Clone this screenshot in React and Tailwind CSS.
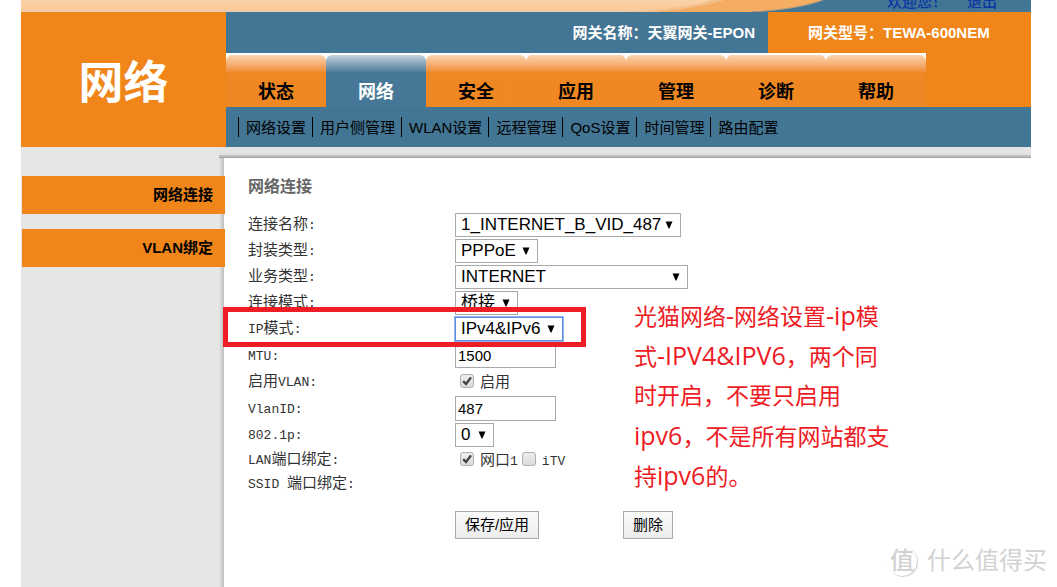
import React, { useState } from 'react';

const tabs = ['状态', '网络', '安全', '应用', '管理', '诊断', '帮助'];

const subMenu = [
  '网络设置',
  '用户侧管理',
  'WLAN设置',
  '远程管理',
  'QoS设置',
  '时间管理',
  '路由配置'
];

const sideMenu = ['网络连接', 'VLAN绑定'];

const noteLines = [
  '光猫网络-网络设置-ip模',
  '式-IPV4&IPV6，两个同',
  '时开启，不要只启用',
  'ipv6，不是所有网站都支',
  '持ipv6的。'
];

// Gives the Latin runs of a text a size of their own
const Mixed = ({ text, latin = 'text-[13px]' }) =>
  text.split(/([\x20-\x7e]+)/).map((part, index) =>
    index % 2 ? (
      <span key={index} className={`${latin} whitespace-pre`}>{part}</span>
    ) : (
      part
    )
  );

const Row = ({ label, htmlFor, height = 'h-[26px]', marked, children }) => (
  <tr className={height}>
    <th scope="row" className="relative w-[207px] p-0 pt-0.5 text-left font-normal whitespace-nowrap">
      {htmlFor ? (
        <label htmlFor={htmlFor}><Mixed text={label} /></label>
      ) : (
        <Mixed text={label} />
      )}
      {marked && (
        <div className="pointer-events-none absolute -top-[9px] -left-[25px] z-10 h-10 w-[363px] border-5 border-[#ee1c25]" />
      )}
    </th>
    <td className="p-0">{children}</td>
  </tr>
);

const Select = ({ id, value, width, focused }) => (
  <div className={`relative ${width}`}>
    <select
      id={id}
      defaultValue={value}
      className={`block h-6 w-full appearance-none border bg-white pl-[5px] font-['Liberation_Sans','Noto_Sans_CJK_SC',sans-serif] text-[17px] leading-[22px] text-black outline-none ${
        focused ? 'border-[#5b8edc] ring-1 ring-[#8fb5f3]' : 'border-[#a9a9a9]'
      }`}
    >
      <option>{value}</option>
    </select>
    <svg viewBox="0 0 8 8" className="pointer-events-none absolute top-2 right-2 h-2 w-2" aria-hidden="true">
      <path d="M0.5 0.5h7L4.4 7.5h-0.8z" fill="#000" />
    </svg>
  </div>
);

const TextBox = ({ id, value }) => (
  <input
    id={id}
    type="text"
    defaultValue={value}
    className="block h-[25px] w-[101px] border border-[#a9a9a9] bg-white pl-0.5 font-['Liberation_Sans',sans-serif] text-[15px] text-black"
  />
);

const CheckBox = ({ id, label, initial = false }) => {
  const [checked, setChecked] = useState(initial);

  return (
    <label htmlFor={id} className="flex items-start gap-1.5">
      <span className="relative mt-1 block h-[14px] w-[14px]">
        <input
          id={id}
          type="checkbox"
          checked={checked}
          onChange={() => setChecked(!checked)}
          className="block h-[14px] w-[14px] appearance-none rounded-[3px] border border-[#b0b0b0] bg-linear-to-b from-[#ededed] to-[#dcdcdc]"
        />
        {checked && (
          <svg viewBox="0 0 14 14" className="pointer-events-none absolute inset-0" aria-hidden="true">
            <path d="M3.2 7.2L6 10L11 3.4" fill="none" stroke="#444" strokeWidth="2.4" />
          </svg>
        )}
      </span>
      <span className="pt-1"><Mixed text={label} /></span>
    </label>
  );
};

const Banner = () => (
  <div className="relative h-3 overflow-hidden bg-[#437594]">
    <svg viewBox="0 0 1010 12" preserveAspectRatio="none" className="absolute inset-0 h-full w-full" aria-hidden="true">
      <defs>
        <linearGradient id="peach" x1="0" y1="0" x2="0" y2="1">
          <stop offset="0" stopColor="#fad2a8" />
          <stop offset="0.75" stopColor="#fccb9a" />
          <stop offset="1" stopColor="#e6cdb0" />
        </linearGradient>
      </defs>
      <path d="M0 0H802C785 6 765 10 730 12H0z" fill="url(#peach)" />
      <path d="M632 12C665 9 685 5 702 0H802C785 6 765 10 730 12z" fill="#f4ad63" />
      <path d="M632 12C665 9 685 5 702 0H690C675 6 640 10 600 12z" fill="#f3c08c" />
      <path d="M802 0C785 6 765 10 730 12" fill="none" stroke="#a89580" />
    </svg>
    <div className="absolute -top-2.5 right-[34px] flex gap-5 text-[15px] leading-6 font-medium text-[#0b35a3]">
      <span>欢迎您！</span>
      <a href="#logout">退出</a>
    </div>
  </div>
);

const Header = () => (
  <header className="flex">
    <div className="flex w-[205px] shrink-0 items-center justify-center bg-[#f08519]">
      <h1 className="pt-2 text-[45px] leading-none font-bold text-white">网络</h1>
    </div>
    <div className="min-w-0 grow bg-[#437594]">
      <div className="flex h-[41px] items-center justify-end text-[15px] font-bold text-white">
        <div className="pt-0.5 pr-[13px]">网关名称：天翼网关-EPON</div>
        <div className="flex h-full w-[263px] items-center bg-[#f08519] pt-0.5 pl-10">网关型号：TEWA-600NEM</div>
      </div>
      <nav className="flex h-[54px] bg-[#f08519]">
        {tabs.map((tab) => (
          <div key={tab} className="w-[100px] bg-white pt-0.5">
            <a
              href="#tab"
              className={`flex h-[52px] items-end justify-center rounded-t-md bg-linear-to-b pb-px text-lg font-bold ${
                tab === '网络'
                  ? 'from-[#c3d3dd] to-[#467796] to-35% text-white'
                  : 'from-[#fbd5b0] to-[#ef8722] to-35% text-black'
              }`}
            >
              {tab}
            </a>
          </div>
        ))}
      </nav>
      <nav className="flex h-10 items-center pl-3 text-[15px] text-black">
        {subMenu.map((item) => (
          <a key={item} href="#menu" className="h-5 border-l border-black pr-1.5 pl-[7px] leading-[22px] whitespace-nowrap">
            {item}
          </a>
        ))}
      </nav>
    </div>
  </header>
);

const Sidebar = () => (
  <aside className="w-[203px] shrink-0 bg-[#e6e6e6] bg-linear-to-l from-[#bdbdbd] to-[#e6e6e6] to-[5px] pt-[29px]">
    <nav className="relative z-10 -mr-px ml-px flex flex-col gap-[15px]">
      {sideMenu.map((item) => (
        <a
          key={item}
          href="#side"
          className="flex h-[38px] items-center justify-end bg-[#f08519] pr-3 text-[15px] font-bold text-black"
        >
          {item}
        </a>
      ))}
    </nav>
  </aside>
);

const ConnectionForm = () => (
  <form
    className="px-6 pt-5 font-['Liberation_Mono','Noto_Sans_CJK_SC',monospace] text-[15px] leading-5 text-[#333]"
    onSubmit={(e) => e.preventDefault()}
  >
    <h2 className="mb-[14px] text-base leading-5 font-bold text-[#666]">网络连接</h2>
    <table className="border-collapse">
      <tbody>
        <Row label="连接名称:" htmlFor="name">
          <Select id="name" value="1_INTERNET_B_VID_487" width="w-[226px]" />
        </Row>
        <Row label="封装类型:" htmlFor="encap">
          <Select id="encap" value="PPPoE" width="w-[83px]" />
        </Row>
        <Row label="业务类型:" htmlFor="service">
          <Select id="service" value="INTERNET" width="w-[233px]" />
        </Row>
        <Row label="连接模式:" htmlFor="mode">
          <Select id="mode" value="桥接" width="w-[63px]" />
        </Row>
        <Row label="IP模式:" htmlFor="ip" marked>
          <Select id="ip" value="IPv4&IPv6" width="w-[108px]" focused />
        </Row>
        <Row label="MTU:" htmlFor="mtu" height="h-[27px]">
          <TextBox id="mtu" value="1500" />
        </Row>
        <Row label="启用VLAN:">
          <div className="pl-[5px]">
            <CheckBox id="vlan" label="启用" initial />
          </div>
        </Row>
        <Row label="VlanID:" htmlFor="vlanid" height="h-[27px]">
          <TextBox id="vlanid" value="487" />
        </Row>
        <Row label="802.1p:" htmlFor="priority">
          <Select id="priority" value="0" width="w-[39px]" />
        </Row>
        <Row label="LAN端口绑定:" height="h-6">
          <div className="flex gap-1 pl-[5px]">
            <CheckBox id="port1" label="网口1" initial />
            <CheckBox id="itv" label="iTV" />
          </div>
        </Row>
        <Row label="SSID 端口绑定:" height="h-6" />
      </tbody>
    </table>
    <div className="mt-[15px] flex gap-[84px] pl-[207px] font-['Liberation_Sans','Noto_Sans_CJK_SC',sans-serif]">
      <button type="submit" className="h-7 w-[84px] border border-[#a9a9a9] bg-linear-to-b from-[#fafafa] to-[#ececec] text-black">
        保存/应用
      </button>
      <button type="button" className="h-7 w-[50px] border border-[#a9a9a9] bg-linear-to-b from-[#fafafa] to-[#ececec] text-black">
        删除
      </button>
    </div>
  </form>
);

const Note = () => (
  <div className="absolute top-[148px] left-[410px] font-['Open_Sans','Noto_Sans_CJK_SC',sans-serif] text-[23px] leading-10 whitespace-nowrap text-[#ee1c25]">
    {noteLines.map((line) => (
      <p key={line} className="h-10">
        <Mixed text={line} latin="text-[25px]" />
      </p>
    ))}
  </div>
);

const Watermark = () => (
  <div className="absolute right-2.5 bottom-2.5 flex items-center gap-2.5 text-[#d2d2d2]">
    <span className="flex h-[30px] w-[30px] items-center justify-center rounded-full text-2xl leading-none font-medium shadow-[1px_1px_1px_#cfcfcf]">
      值
    </span>
    <span className="text-2xl leading-8">什么值得买</span>
  </div>
);

export default function App() {
  return (
    <div className="relative flex min-h-screen flex-col overflow-hidden bg-white pr-[26px] pl-[21px] font-['Liberation_Sans','Noto_Sans_CJK_SC',sans-serif]">
      <Banner />
      <Header />
      <div className="flex grow">
        <Sidebar />
        <main className="relative min-w-0 grow">
          <div className="relative -ml-[5px] h-[11px] border-b border-[#a3a3a3] bg-[#e4e4e4] shadow-[inset_0_-2px_1px_#bdbdbd]" />
          <ConnectionForm />
          <Note />
        </main>
      </div>
      <Watermark />
    </div>
  );
}
